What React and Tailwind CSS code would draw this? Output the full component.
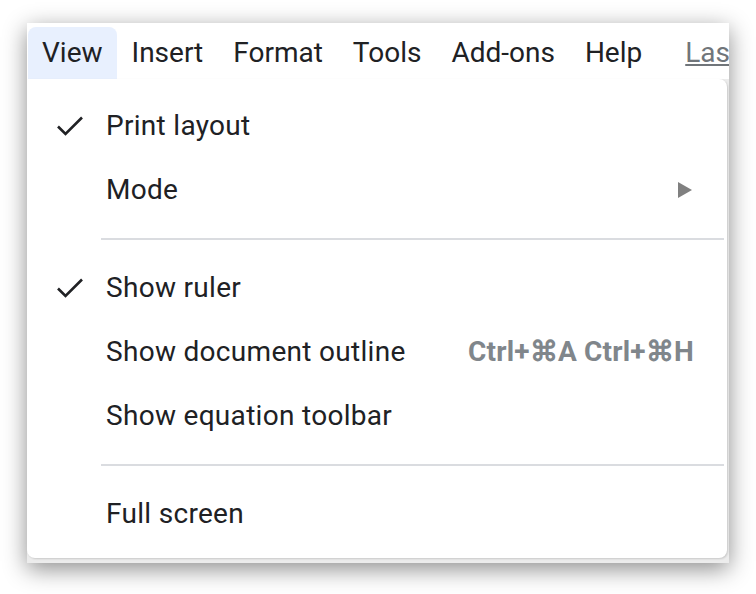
const menuBar = ['View', 'Insert', 'Format', 'Tools', 'Add-ons', 'Help'];

function Item({ checked, label, shortcut, sub }) {
  return (
    <div className="flex items-center h-[64px] pr-[33px]">
      <div className="w-[79px] flex justify-end pr-[22px]">
        {checked && (
          <svg width="28" height="24" viewBox="0 0 28 24" fill="none">
            <path d="M2 12.5 L9.5 20 L26 3.5" stroke="#202124" strokeWidth="2.6" />
          </svg>
        )}
      </div>
      <span className="text-[28px] tracking-[0.3px] text-[#202124] flex-1 whitespace-nowrap">{label}</span>
      {shortcut && (
        <span className="text-[28px] tracking-[0.2px] font-bold text-[#80868b] whitespace-nowrap">{shortcut}</span>
      )}
      {sub && (
        <svg width="14" height="16" viewBox="0 0 14 16" className="mr-[2px]">
          <path d="M0 0 L14 8 L0 16 Z" fill="#808080" />
        </svg>
      )}
    </div>
  );
}

function Sep() {
  return <div className="ml-[74px] mr-[3px] my-[16px] h-[2px] bg-[#dadce0]" />;
}

export default function App() {
  return (
    <div className="w-[756px] h-[594px] bg-white pt-[23px] pl-[27px]" style={{ fontFamily: 'Roboto, "Liberation Sans", sans-serif' }}>
      <div className="w-[702px] h-[540px] bg-[#ececec] flex flex-col overflow-hidden shadow-[0_6px_22px_rgba(0,0,0,0.45)]">
        <div className="h-[56px] bg-white flex items-end shrink-0 pl-[1px]">
          {menuBar.map((m, i) => (
            <div
              key={m}
              className={`h-[52px] flex items-center text-[28px] text-[#202124] rounded-t-[8px] whitespace-nowrap shrink-0 ${i === 0 ? 'bg-[#e8f0fe] px-[14px]' : 'px-[15px]'}`}
            >
              {m}
            </div>
          ))}
          <div className="h-[52px] flex items-center pl-[28px] text-[28px] text-[#70757a] underline whitespace-nowrap shrink-0">
            Last edit
          </div>
        </div>
        <div className="bg-white w-[700px] h-[479px] rounded-b-[8px] rounded-tr-[8px] shadow-[1px_1px_2px_rgba(0,0,0,0.15)] pt-[15px] shrink-0">
          <Item checked label="Print layout" />
          <Item label="Mode" sub />
          <Sep />
          <Item checked label="Show ruler" />
          <Item label="Show document outline" shortcut="Ctrl+⌘A Ctrl+⌘H" />
          <Item label="Show equation toolbar" />
          <Sep />
          <Item label="Full screen" />
        </div>
      </div>
    </div>
  );
}
